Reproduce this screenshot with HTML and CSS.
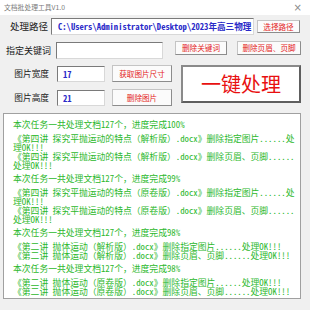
FILE: index.html
```html
<!DOCTYPE html>
<html lang="zh-CN">
<head>
<meta charset="utf-8">
<title>文档批处理工具V1.0</title>
<link rel="stylesheet" href="styles.css">
</head>
<body>
<div class="window">
  <div class="titlebar">
    <span class="title">文档批处理工具V1.0</span>
    <span class="close">×</span>
  </div>
  <div class="row row-path">
    <label class="lbl lbl-path">处理路径</label>
    <div class="input input-path">C:\Users\Administrator\Desktop\2023年高三物理</div>
    <button class="btn btn-path">选择路径</button>
  </div>
  <div class="row row-key">
    <label class="lbl lbl-key">指定关键词</label>
    <div class="input input-key"></div>
    <button class="btn btn-delkey">删除关键词</button>
    <button class="btn btn-delhf">删除页眉、页脚</button>
  </div>
  <div class="row row-img">
    <div class="img-fields">
      <div class="field">
        <label class="lbl lbl-img">图片宽度</label>
        <div class="input input-num">17</div>
        <button class="btn btn-img">获取图片尺寸</button>
      </div>
      <div class="field">
        <label class="lbl lbl-img">图片高度</label>
        <div class="input input-num">21</div>
        <button class="btn btn-img">删除图片</button>
      </div>
    </div>
    <button class="btn-big">一键处理</button>
  </div>
  <div class="log">
    <div class="block">
      <div class="hdr">本次任务一共处理文档127个，进度完成100%</div>
      <div class="entry">《第四讲 探究平抛运动的特点（解析版）.docx》删除指定图片......处理OK!!!</div>
      <div class="entry">《第四讲 探究平抛运动的特点（解析版）.docx》删除页眉、页脚......处理OK!!!</div>
    </div>
    <div class="block">
      <div class="hdr">本次任务一共处理文档127个，进度完成99%</div>
      <div class="entry">《第四讲 探究平抛运动的特点（原卷版）.docx》删除指定图片......处理OK!!!</div>
      <div class="entry">《第四讲 探究平抛运动的特点（原卷版）.docx》删除页眉、页脚......处理OK!!!</div>
    </div>
    <div class="block">
      <div class="hdr">本次任务一共处理文档127个，进度完成98%</div>
      <div class="entry">《第二讲 抛体运动（解析版）.docx》删除指定图片......处理OK!!!</div>
      <div class="entry">《第二讲 抛体运动（解析版）.docx》删除页眉、页脚......处理OK!!!</div>
    </div>
    <div class="block">
      <div class="hdr">本次任务一共处理文档127个，进度完成98%</div>
      <div class="entry">《第二讲 抛体运动（原卷版）.docx》删除指定图片......处理OK!!!</div>
      <div class="entry">《第二讲 抛体运动（原卷版）.docx》删除页眉、页脚......处理OK!!!</div>
    </div>
  </div>
</div>
</body>
</html>
```
FILE: styles.css
```css
html, body {
  margin: 0;
  padding: 0;
}
body {
  width: 310px;
  height: 310px;
  overflow: hidden;
  background: #f0f0f0;
  font-family: "Noto Sans CJK SC", sans-serif;
}
.window {
  width: 310px;
  height: 310px;
  display: flex;
  flex-direction: column;
}
.titlebar {
  height: 15px;
  flex: none;
  background: #ffffff;
  display: flex;
  align-items: center;
  justify-content: space-between;
  padding: 0 8px 0 4px;
}
.title {
  font-size: 6.8px;
  color: #7a7a7a;
  line-height: 15px;
}
.close {
  font-family: "DejaVu Sans", sans-serif;
  font-size: 10px;
  color: #8a8a8a;
  line-height: 15px;
}
.row {
  display: flex;
  align-items: flex-start;
  flex: none;
}
.lbl {
  color: #1a1a1a;
  text-align: right;
  white-space: nowrap;
  line-height: 17px;
}
.input {
  box-sizing: border-box;
  background: #ffffff;
  border: 1px solid;
  border-color: #7a7a7a #d8d8d8 #d8d8d8 #7a7a7a;
  font-family: "Noto Sans Mono CJK SC", "Noto Sans CJK SC", monospace;
  font-weight: bold;
  color: #2a2ac8;
  white-space: nowrap;
  overflow: hidden;
}
.btn {
  box-sizing: border-box;
  margin: 0;
  padding: 0;
  background: #fbfbfb;
  border: 1px solid;
  border-color: #c4c4c4 #8c8c8c #8c8c8c #c4c4c4;
  color: #e41c1c;
  font-family: "Noto Sans CJK SC", sans-serif;
  font-size: 7.6px;
  line-height: 1;
  white-space: nowrap;
  display: flex;
  align-items: center;
  justify-content: center;
}

/* row 1 */
.row-path {
  margin-top: 3px;
  height: 17px;
}
.lbl-path {
  width: 48px;
  margin-right: 3px;
  font-size: 9.5px;
}
.input-path {
  width: 203px;
  height: 17px;
  font-size: 8.6px;
  line-height: 15px;
  padding-left: 6px;
}
.btn-path {
  margin-left: 3px;
  margin-top: 2px;
  width: 43px;
  height: 13px;
}

/* row 2 */
.row-key {
  margin-top: 6px;
  height: 18px;
}
.lbl-key {
  width: 51px;
  margin-right: 5px;
  margin-top: 1px;
  font-size: 9px;
}
.input-key {
  width: 107px;
  height: 17px;
  margin-top: 1px;
}
.btn-delkey {
  margin-left: 12px;
  width: 52px;
  height: 14px;
}
.btn-delhf {
  margin-left: 10px;
  width: 64px;
  height: 14px;
}

/* rows 3-4 */
.row-img {
  margin-top: 6px;
}
.img-fields {
  width: 172px;
  display: flex;
  flex-direction: column;
  gap: 7px;
}
.field {
  display: flex;
  align-items: flex-start;
  height: 17px;
}
.lbl-img {
  width: 49px;
  margin-right: 8px;
  font-size: 8.7px;
}
.input-num {
  width: 48px;
  height: 16px;
  margin-top: 1px;
  font-size: 8.6px;
  line-height: 14px;
  padding-left: 5px;
}
.btn-img {
  margin-left: 7px;
  width: 60px;
  height: 17px;
}
.btn-big {
  box-sizing: border-box;
  margin: 0 0 0 9px;
  padding: 0;
  width: 120px;
  height: 38px;
  background: #ffffff;
  border: 2px solid;
  border-color: #8a8a8a #5e5e5e #5e5e5e #8a8a8a;
  color: #e81010;
  font-family: "Noto Sans CJK SC", sans-serif;
  font-size: 20px;
  line-height: 1;
  display: flex;
  align-items: center;
  justify-content: center;
}

/* log */
.log {
  flex: none;
  margin: 7px 0 0 3px;
  width: 298px;
  height: 186px;
  box-sizing: border-box;
  background: #ffffff;
  border: 1px solid #a0a0a0;
  padding: 6px 3px 0 9px;
  font-family: "Noto Sans Mono CJK SC", "Noto Sans CJK SC", monospace;
  font-size: 8.8px;
  line-height: 9px;
  color: #2cb82c;
  overflow: hidden;
}
.block {
  margin-bottom: 4px;
}
.hdr {
  margin-bottom: 5px;
}
```
